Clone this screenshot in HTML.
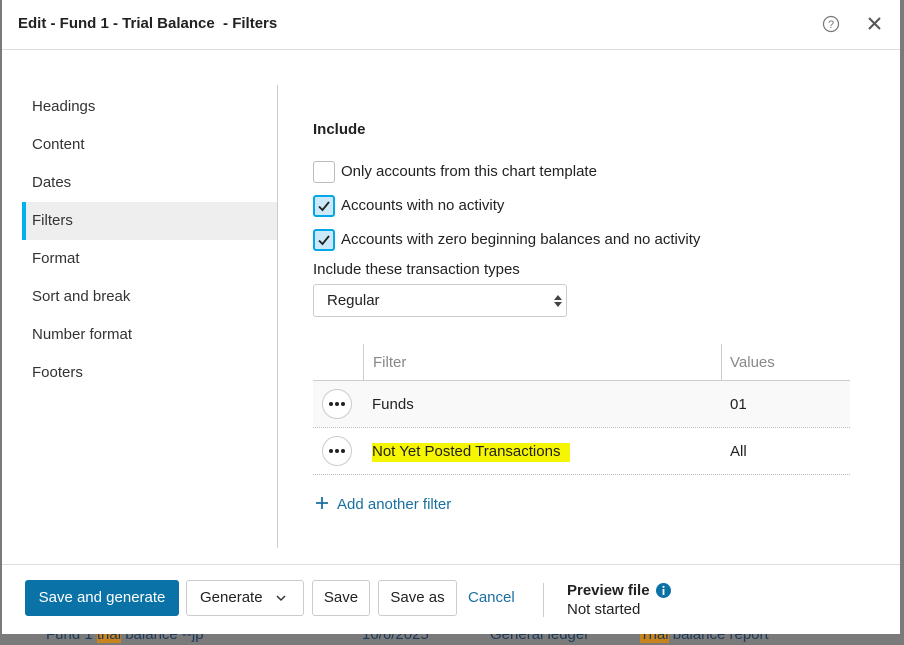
<!DOCTYPE html>
<html><head><meta charset="utf-8">
<style>
*{box-sizing:border-box;margin:0;padding:0}
body{width:904px;height:645px;overflow:hidden;background:#7a7a7a;font-family:"Liberation Sans",sans-serif;color:#222;position:relative}
.bgtext{position:absolute;top:626px;font-size:15px;color:#1c3a5a;filter:blur(0.3px)}
.modal{position:absolute;left:2px;top:0;width:898px;height:634px;background:#fff}
.title{position:absolute;left:16px;top:15px;font-size:15px;font-weight:bold;color:#222}
.hline{position:absolute;left:0;right:0;height:1px;background:#ddd}
.nav{position:absolute;left:20px;top:88px;width:255px}
.nav div{height:38px;line-height:38px;padding-left:10px;font-size:15px;color:#333}
.nav .act{background:#eee;border-left:4px solid #00b0f0;padding-left:6px}
.vline{position:absolute;left:275px;top:85px;width:1px;height:463px;background:#ccc}
.c{position:absolute;font-size:15px;color:#222}
.cb{position:absolute;width:22px;height:22px;border:1px solid #bbb;border-radius:3px;background:#fff}
.cb.on{border:2px solid #00a8e8;background:#cde9f9}
.btn{position:absolute;top:580px;height:36px;border:1px solid #ccc;border-radius:3px;background:#fff;font-size:15px;line-height:34px;text-align:center;color:#222}
.dots{position:absolute;width:30px;height:30px;border:1px solid #ccc;border-radius:50%;background:#fff;display:flex;align-items:center;justify-content:center;gap:2px}
.dots i{width:4px;height:4px;border-radius:50%;background:#222;display:block}
.dash{position:absolute;left:311px;width:537px;height:0;border-top:1px dotted #bbb}
</style></head><body>
<div class="bgtext" style="left:46px">Fund 1 <span style="background:#c8821e">trial</span> balance --jp</div>
<div class="bgtext" style="left:362px">10/6/2025</div>
<div class="bgtext" style="left:490px">General ledger</div>
<div class="bgtext" style="left:640px"><span style="background:#c8821e">Trial</span> balance report</div>
<div class="modal">
<div class="title">Edit - Fund 1 - Trial Balance &nbsp;- Filters</div>
<svg style="position:absolute;left:820px;top:15px" width="18" height="18" viewBox="0 0 18 18"><circle cx="9" cy="9" r="7.5" fill="none" stroke="#777" stroke-width="1.2"/><text x="9" y="13" font-size="11" text-anchor="middle" fill="#777" font-family="Liberation Sans">?</text></svg>
<svg style="position:absolute;left:866px;top:17px" width="13" height="13" viewBox="0 0 13 13"><path d="M1 1L12 12M12 1L1 12" stroke="#555" stroke-width="2"/></svg>
<div class="hline" style="top:49px"></div>
<div class="nav">
<div>Headings</div><div>Content</div><div>Dates</div><div class="act">Filters</div><div>Format</div><div>Sort and break</div><div>Number format</div><div>Footers</div>
</div>
<div class="vline"></div>
<div class="c" style="left:311px;top:121px;font-weight:bold">Include</div>
<div class="cb" style="left:311px;top:161px"></div>
<div class="c" style="left:339px;top:163px">Only accounts from this chart template</div>
<div class="cb on" style="left:311px;top:195px"><svg width="18" height="18" viewBox="0 0 18 18"><path d="M4 9.5L7.5 13L14 5" fill="none" stroke="#222" stroke-width="1.8"/></svg></div>
<div class="c" style="left:339px;top:197px">Accounts with no activity</div>
<div class="cb on" style="left:311px;top:229px"><svg width="18" height="18" viewBox="0 0 18 18"><path d="M4 9.5L7.5 13L14 5" fill="none" stroke="#222" stroke-width="1.8"/></svg></div>
<div class="c" style="left:339px;top:231px">Accounts with zero beginning balances and no activity</div>
<div class="c" style="left:311px;top:261px">Include these transaction types</div>
<div style="position:absolute;left:311px;top:284px;width:254px;height:33px;border:1px solid #ccc;border-radius:3px"></div>
<div class="c" style="left:325px;top:292px">Regular</div>
<svg style="position:absolute;left:552px;top:294px" width="8" height="14" viewBox="0 0 8 14"><path d="M0 6L4 1L8 6ZM0 8L4 13L8 8Z" fill="#444"/></svg>
<div style="position:absolute;left:361px;top:344px;width:1px;height:36px;background:#ccc"></div>
<div style="position:absolute;left:719px;top:344px;width:1px;height:36px;background:#ccc"></div>
<div class="c" style="left:371px;top:354px;color:#888">Filter</div>
<div class="c" style="left:728px;top:354px;color:#888">Values</div>
<div style="position:absolute;left:311px;top:380px;width:537px;height:1px;background:#ccc"></div>
<div style="position:absolute;left:311px;top:381px;width:537px;height:46px;background:#f9f9f9"></div>
<div class="dots" style="left:320px;top:389px"><i></i><i></i><i></i></div>
<div class="c" style="left:370px;top:396px">Funds</div>
<div class="c" style="left:728px;top:396px">01</div>
<div class="dash" style="top:427px"></div>
<div class="dots" style="left:320px;top:436px"><i></i><i></i><i></i></div>
<div class="c" style="left:370px;top:443px;background:#f6f600;padding:0 10px 2px 0">Not Yet Posted Transactions</div>
<div class="c" style="left:728px;top:443px">All</div>
<div class="dash" style="top:474px"></div>
<svg style="position:absolute;left:313px;top:496px" width="14" height="14" viewBox="0 0 14 14"><path d="M7 1V13M1 7H13" stroke="#1a6fa0" stroke-width="1.8"/></svg>
<div class="c" style="left:335px;top:496px;color:#1a6fa0">Add another filter</div>
<div class="hline" style="top:564px"></div>
<div class="btn" style="left:23px;width:154px;background:#0a72a6;border-color:#0a72a6;color:#fff">Save and generate</div>
<div class="btn" style="left:184px;width:118px;text-align:left;padding-left:13px">Generate <svg style="position:absolute;left:89px;top:14px" width="10" height="7" viewBox="0 0 10 7"><path d="M1 1L5 5L9 1" fill="none" stroke="#333" stroke-width="1.5"/></svg></div>
<div class="btn" style="left:310px;width:58px">Save</div>
<div class="btn" style="left:376px;width:79px">Save as</div>
<div class="c" style="left:466px;top:589px;color:#1a6fa0">Cancel</div>
<div style="position:absolute;left:541px;top:583px;width:1px;height:34px;background:#ccc"></div>
<div class="c" style="left:565px;top:582px;font-weight:bold">Preview file</div>
<svg style="position:absolute;left:654px;top:583px" width="15" height="15" viewBox="0 0 15 15"><circle cx="7.5" cy="7.5" r="7.5" fill="#0a72a6"/><rect x="6.6" y="6" width="1.8" height="6" fill="#fff"/><circle cx="7.5" cy="3.8" r="1.1" fill="#fff"/></svg>
<div class="c" style="left:565px;top:601px">Not started</div>
</div>
</body></html>
